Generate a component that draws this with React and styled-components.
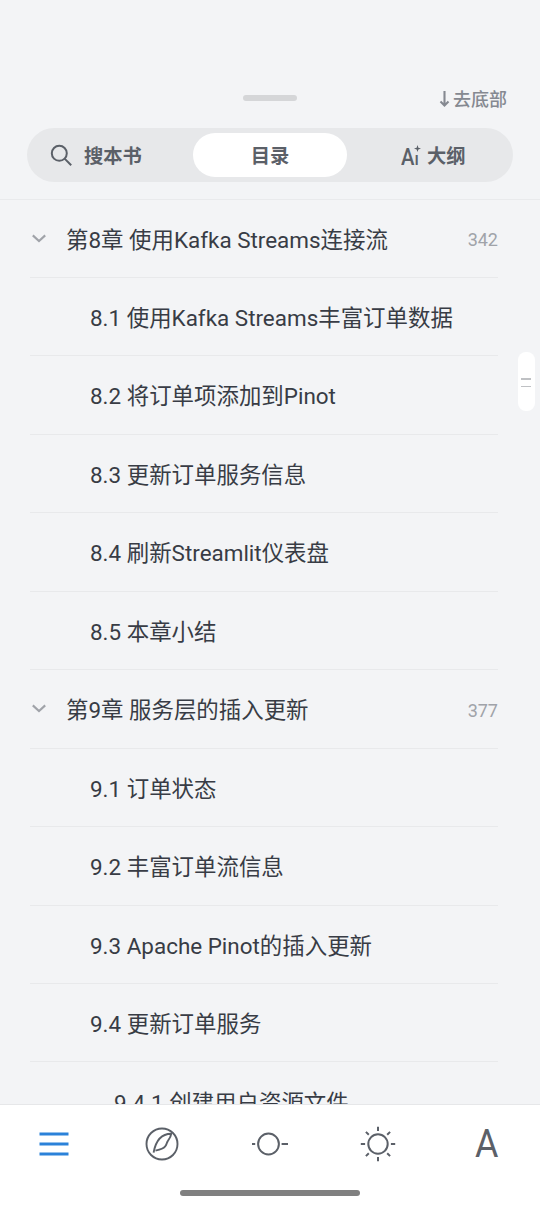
import styled, { createGlobalStyle } from 'styled-components'

const chapters = [
  { level: 0, title: '第8章 使用Kafka Streams连接流', page: '342' },
  { level: 1, title: '8.1 使用Kafka Streams丰富订单数据' },
  { level: 1, title: '8.2 将订单项添加到Pinot' },
  { level: 1, title: '8.3 更新订单服务信息' },
  { level: 1, title: '8.4 刷新Streamlit仪表盘' },
  { level: 1, title: '8.5 本章小结' },
  { level: 0, title: '第9章 服务层的插入更新', page: '377' },
  { level: 1, title: '9.1 订单状态' },
  { level: 1, title: '9.2 丰富订单流信息' },
  { level: 1, title: '9.3 Apache Pinot的插入更新' },
  { level: 1, title: '9.4 更新订单服务' },
  { level: 2, title: '9.4.1 创建用户资源文件' },
]

function App() {
  return (
    <Screen>
      <GlobalStyle />
      <Header>
        <TopBar>
          <span />
          <Grabber />
          <ToBottom>
            <ArrowIcon />
            去底部
          </ToBottom>
        </TopBar>
        <Tabs>
          <Tab $pad="18px" $gap="12px">
            <SearchIcon />
            搜本书
          </Tab>
          <Tab $active>目录</Tab>
          <Tab $pad="54px" $gap="6px">
            <AiMark>
              <AiText>A<small>ı</small></AiText>
              <Spark width="7" height="7" viewBox="0 0 8 8">
                <path d="M4 0L5 3L8 4L5 5L4 8L3 5L0 4L3 3Z" fill="currentColor" />
              </Spark>
            </AiMark>
            大纲
          </Tab>
        </Tabs>
      </Header>

      <List>
        {chapters.map((item) => (
          <Row key={item.title}>
            <Toggle>{item.level === 0 && <Chevron />}</Toggle>
            <Title $level={item.level}>{item.title}</Title>
            <Page>{item.page}</Page>
          </Row>
        ))}
      </List>
      <ScrollHandle>
        <i />
        <i />
      </ScrollHandle>

      <Footer>
        <Nav>
          <NavItem $active><MenuIcon /></NavItem>
          <NavItem><CompassIcon /></NavItem>
          <NavItem><ProgressIcon /></NavItem>
          <NavItem><SunIcon /></NavItem>
          <NavItem><FontMark>A</FontMark></NavItem>
        </Nav>
        <HomeBar />
      </Footer>
    </Screen>
  )
}

export default App

const ArrowIcon = () => (
  <svg width="12" height="18" viewBox="0 0 12 18" fill="none" stroke="currentColor" strokeWidth="2.1">
    <path d="M6.5 0V14.4M2.5 10.6l4 4l4-4" />
  </svg>
)

const Chevron = () => (
  <svg width="14" height="9" viewBox="0 0 14 9" fill="none" stroke="#a0a3a9" strokeWidth="2.1">
    <path d="M0.8 1.4L7 7l6.2-5.6" />
  </svg>
)

const SearchIcon = () => (
  <svg width="22" height="22" viewBox="0 0 22 22" fill="none" stroke="currentColor" strokeWidth="2">
    <circle cx="9.3" cy="9.3" r="7.5" />
    <path d="M14.6 14.6l6.6 6.6" />
  </svg>
)

const MenuIcon = () => (
  <svg width="36" height="36" viewBox="0 0 36 36" stroke="currentColor" strokeWidth="3">
    <path d="M3.5 8h29M3.5 18h29M3.5 28h29" />
  </svg>
)

const CompassIcon = () => (
  <svg width="36" height="36" viewBox="0 0 36 36" fill="none" stroke="currentColor" strokeWidth="1.9">
    <circle cx="18" cy="18" r="15.5" />
    <path
      d="M9.6 26.6C11 19 15 7.8 27.2 7.8C26.8 11 25 13.2 23.9 14.8C22.5 16.6 23 18.4 21.2 20.4C18.5 23.5 14.5 24 11.5 24.6"
      strokeLinejoin="round"
    />
  </svg>
)

const ProgressIcon = () => (
  <svg width="40" height="36" viewBox="0 0 40 36" fill="none" stroke="currentColor" strokeWidth="2">
    <circle cx="18.5" cy="18" r="10.4" />
    <path d="M2 18h3.2M31.6 18h6.4" />
  </svg>
)

const SunIcon = () => (
  <svg width="36" height="36" viewBox="0 0 36 36" fill="none" stroke="currentColor" strokeWidth="2">
    <circle cx="18" cy="18" r="9.7" />
    <path d="M18 .8v4.3M18 30.9v4.3M.8 18h4.3M30.9 18h4.3M5.9 5.9l2.9 2.9M27.2 27.2l2.9 2.9M5.9 30.1l2.9-2.9M27.2 8.8l2.9-2.9" />
  </svg>
)

const GlobalStyle = createGlobalStyle`
* {
box-sizing: border-box;
}

body {
margin: 0;
background: #f3f4f6;
font-family: Roboto, "Noto Sans CJK SC", sans-serif;
}

svg {
display: block;
flex: none;
}
`

const Screen = styled.div`
height: 1206px;
display: flex;
flex-direction: column;
position: relative;
overflow: hidden;
background: #f3f4f6;
`

const Header = styled.header`
flex: none;
height: 199.5px;
padding: 84px 27px 0;
border-bottom: 1px solid #e9eaec;
`

const TopBar = styled.div`
height: 29px;
display: grid;
grid-template-columns: 1fr 54px 1fr;
align-items: center;
`

const Grabber = styled.div`
height: 6px;
margin-bottom: 1px;
border-radius: 3px;
background: #d5d6d8;
`

const ToBottom = styled.div`
display: flex;
justify-content: flex-end;
align-items: center;
gap: 3px;
padding: 2px 6px 0 0;
color: #858991;
font-size: 18px;
font-weight: 500;
line-height: 27px;
`

const Tabs = styled.div`
height: 54px;
margin-top: 15.4px;
padding: 5px;
display: grid;
grid-template-columns: 161px 154px 1fr;
border-radius: 27px;
background: #e7e8ea;
`

const Tab = styled.div`
display: flex;
align-items: center;
justify-content: ${(props) => (props.$active ? 'center' : 'flex-start')};
gap: ${(props) => props.$gap || 0};
padding-left: ${(props) => props.$pad || 0};
border-radius: 23px;
background: ${(props) => (props.$active ? '#fff' : 'transparent')};
color: #5b6068;
font-size: 19.3px;
font-weight: 700;
`

const AiMark = styled.div`
position: relative;
width: 20px;
height: 22px;
`

const AiText = styled.span`
display: block;
width: 20px;
transform: scaleX(.88);
transform-origin: left;
font-size: 23px;
font-weight: 500;
line-height: 28px;
white-space: nowrap;

small {
font-size: 19px;
}
`

const Spark = styled.svg`
position: absolute;
right: 0;
top: 1px;
`

const List = styled.div`
flex: 1;
min-height: 0;
padding: 0 42px 0 30px;
overflow: hidden;
`

const Row = styled.div`
height: 78.46px;
display: flex;
align-items: center;
padding-top: 2.6px;
border-bottom: 1px solid #e8e9eb;
color: #383c45;
`

const Toggle = styled.div`
width: 36px;
padding: 0 0 3px 2px;
`

const Title = styled.div`
flex: 1;
padding-left: ${(props) => props.$level * 24}px;
font-size: 22.45px;
line-height: 32px;
white-space: nowrap;
`

const Page = styled.div`
color: #a0a3a9;
font-size: 18px;
`

const ScrollHandle = styled.div`
position: absolute;
right: 5px;
top: 352px;
width: 17px;
height: 59px;
display: flex;
flex-direction: column;
align-items: center;
justify-content: center;
gap: 6px;
padding: 2px 1px 0 0;
border-radius: 8px;
background: #fff;

i {
width: 10px;
height: 1.5px;
background: #bfc1c4;
}
`

const Footer = styled.footer`
flex: none;
height: 102px;
border-top: 1px solid #e6e7e9;
background: #fff;
`

const Nav = styled.nav`
height: 77px;
display: grid;
grid-template-columns: repeat(5, 108px);
`

const NavItem = styled.div`
display: flex;
align-items: center;
justify-content: center;
padding-right: 1px;
color: ${(props) => (props.$active ? '#2b82d9' : '#5b6068')};
`

const FontMark = styled.span`
padding: 1px 0 0 2px;
transform: scaleX(.92);
font-size: 39px;
font-weight: 400;
line-height: 40px;
`

const HomeBar = styled.div`
width: 180px;
height: 6px;
margin: 7.5px auto 0;
border-radius: 3px;
background: #808080;
`
